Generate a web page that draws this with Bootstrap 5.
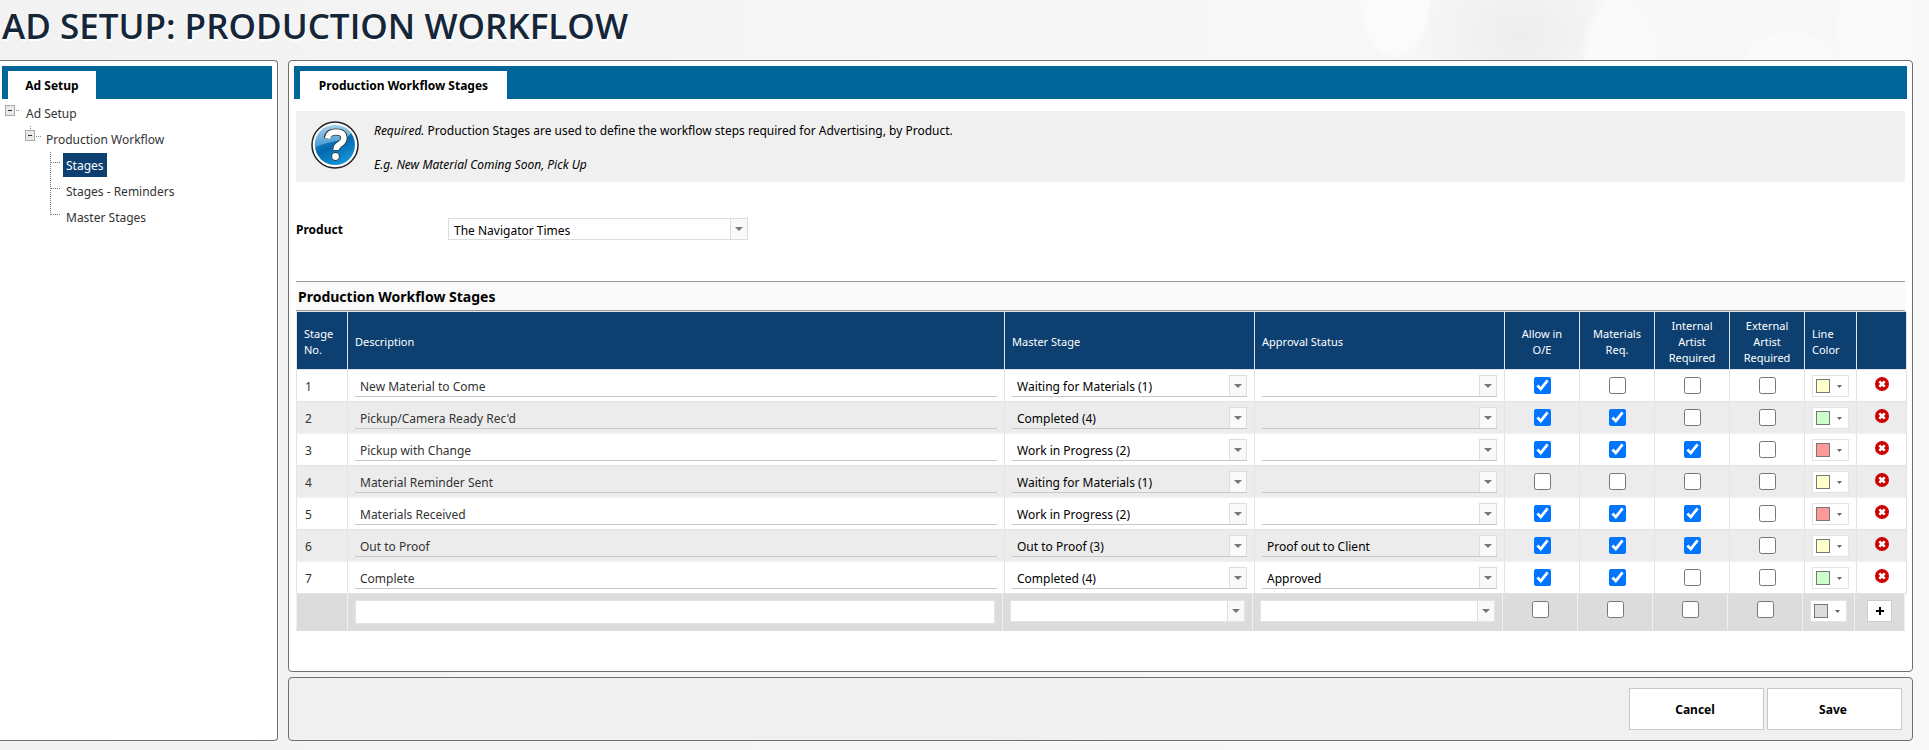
<!DOCTYPE html>
<html lang="en">
<head>
<meta charset="utf-8">
<meta name="viewport" content="width=device-width, initial-scale=1">
<title>Ad Setup: Production Workflow</title>
<link rel="stylesheet" href="https://cdn.jsdelivr.net/npm/bootstrap@5.3.0/dist/css/bootstrap.min.css">
<style>
  body {
    font: 12px/17px "Noto Sans", "Open Sans", sans-serif;
    color: #000;
    background:
      radial-gradient(ellipse 36px 58px at 1395px 0, #fbfbfb 92%, transparent),
      radial-gradient(ellipse 40px 70px at 1620px 60px, #fafafa 80%, transparent),
      radial-gradient(ellipse 50px 40px at 1790px 70px, #fafafa 90%, transparent),
      radial-gradient(ellipse 40px 70px at 1875px 25px, #fafafa 90%, transparent),
      radial-gradient(ellipse 110px 90px at 1520px 35px, #ededed, transparent),
      linear-gradient(90deg, #f2f2f2, #f7f7f7 60%, #f8f8f8);
  }
  .page-title { font: 600 35px/52px "Open Sans", "Noto Sans", sans-serif; color: #152639; text-shadow: 1px 2px 1px #fff; padding: 0 2px 8px; }
  .workspace { padding: 0 16px 9px 0; gap: 10px; }
  .panel { background: #fff; border: 1px solid #707070; border-radius: 4px; padding: 5px; }
  .side-panel { flex: 0 0 278px; border-left: 0; border-radius: 0 4px 4px 0; padding-left: 2px; }
  .tab-strip { background: #006699; padding: 5px 6px 0; height: 33px; }
  .tab-strip .nav-link { background: #fff; color: #000; font-weight: 700; padding: 1px 16px 0; line-height: 27px; min-width: 88px; text-align: center; }
  .main-tab .nav-link { min-width: 207px; }

  .tree-row { height: 26px; color: #333; }
  .tree-row a { color: #333; text-decoration: none; padding: 1px 3px 0; line-height: 23px; }
  .tree-row a.current { background: #0d4071; color: #fff; }
  .tree-row svg { flex: none; }
  .tree-list { padding-top: 1px; }
  .level-1 { padding-left: 2px; }
  .level-2 { padding-left: 22px; }
  .level-3 { padding-left: 46px; }

  .panel-body { padding: 0 2px; }
  .info { background: #f0f0f0; margin-top: 12px; padding: 10px 15px; gap: 15px; height: 71px; }
  .info-text { padding-top: 1px; }
  .product { margin: 36px 0 41px; height: 22px; }
  .product label { flex: 0 0 152px; font-weight: 700; padding-top: 1px; }
  .section-title { font-size: 14px; line-height: 27px; font-weight: 700; background: #f9f9f9; border: solid #999; border-width: 1px 0; padding: 1px 2px 0; margin: 0; }

  .combo, .text-field { display: block; width: 100%; height: 22px; border: 0; border-bottom: 1px solid #c8c8c8; border-radius: 0; background-color: transparent; padding: 2px 5px 0; color: #000; outline-offset: 0; }
  .text-field { color: #333; }
  .combo {
    appearance: none; padding-right: 20px;
    background: no-repeat right top/18px 22px url("data:image/svg+xml,%3Csvg xmlns='http://www.w3.org/2000/svg' width='18' height='22'%3E%3Crect x='.5' y='.5' width='17' height='21' fill='%23f9f9f9' stroke='%23ddd'/%3E%3Cpath d='M5 9h8l-4 4z' fill='%23777'/%3E%3C/svg%3E");
    background-origin: border-box;
  }
  .combo.boxed { width: 300px; border: 1px solid #ddd; background-color: #fff; }

  .stages { table-layout: fixed; border-collapse: separate; border-spacing: 0; width: calc(100% + 2px); }
  .stages.new-row { width: 100%; }
  .c-no { width: 52px; } .c-combo { width: 250px; } .c-check { width: 75px; } .c-color { width: 52px; } .c-act { width: 50px; }
  .stages th, .stages td { border: solid #e3e3e3; border-width: 0 1px 1px 0; }
  .stages th:first-child, .stages td:first-child { border-left-width: 1px; }
  .stages th { background: #0d4071; color: #fff; font-weight: 400; font-size: 11px; line-height: 16px; height: 59px; border-top-width: 1px; padding: 6px 7px 3px; }
  .stages td { height: 32px; padding: 5px 7px 0; vertical-align: top; color: #333; }
  .stages td:first-child { padding: 8px 8px 0; }
  .stages tbody tr:nth-child(even) td { background: #ececec; border-bottom-color: #f3f3f3; }
  .stages input[type=checkbox] { width: 17px; height: 17px; margin: 2px 0 0; accent-color: #0075ff; display: inline-block; vertical-align: top; }
  .color-btn { width: 37px; height: 22px; border: 1px solid #e3e3e3; background: #fff; padding: 0 3px; display: flex; align-items: center; gap: 7px; }
  .color-btn i { width: 14px; height: 14px; border: 1px solid #777; }
  .color-btn svg { display: block; }
  .del-btn { border: 0; background: none; padding: 2px 0 0; display: block; margin: 0 auto; line-height: 0; }
  .stages.new-row td { background: #dcdcdc; height: 37px; padding: 6px 7px 0; border-color: #f0f0f0; border-bottom-color: #dcdcdc; }
  .new-row .text-field, .new-row .combo { background-color: #fff; border: 1px solid #e3e3e3; }
  .new-row .text-field { height: 24px; }
  .new-row input[type=checkbox] { margin-top: 1px; }
  .add-btn { width: 25px; height: 22px; border: 1px solid #ccc; background: #fff; padding: 0; display: flex; align-items: center; justify-content: center; margin: 0 auto; }

  .action-bar { background: #f0f0f0; height: 64px; padding: 0 10px; gap: 3px; }
  .action-bar button { width: 135px; height: 42px; border: 1px solid #c8c8c8; border-radius: 0; background: #fff; font-weight: 700; color: #000; padding: 0 8px 0 5px; }
</style>
</head>
<body class="d-flex flex-column min-vh-100">
<h1 class="page-title m-0">AD SETUP: PRODUCTION WORKFLOW</h1>
<div class="workspace d-flex flex-grow-1">
  <aside class="panel side-panel">
    <nav class="nav tab-strip"><a class="nav-link" href="#">Ad Setup</a></nav>
    <ul class="tree-list list-unstyled m-0">
      <li>
        <div class="tree-row level-1 d-flex align-items-center"><svg width="19" height="26"><rect x="1.500" y="5.500" width="9" height="10" fill="#e8e8e8" stroke="#aaa"/><path d="M4 10.500h4" stroke="#333"/><path d="M12 10.500h4" stroke="#888" stroke-dasharray="1 1"/></svg><a href="#">Ad Setup</a></div>
        <ul class="list-unstyled">
          <li>
            <div class="tree-row level-2 d-flex align-items-center"><svg width="19" height="26"><path d="M6.500 0v5M12 10.500h5" stroke="#888" stroke-dasharray="1 1"/><rect x="1.500" y="4.500" width="9" height="10" fill="#e8e8e8" stroke="#aaa"/><path d="M4 9.500h4" stroke="#333"/></svg><a href="#">Production Workflow</a></div>
            <ul class="list-unstyled">
              <li class="tree-row level-3 d-flex align-items-center"><svg width="15" height="26"><path d="M2.500 0v26M3 10.500h9" stroke="#777" stroke-dasharray="1 1"/></svg><a class="current" href="#">Stages</a></li>
              <li class="tree-row level-3 d-flex align-items-center"><svg width="15" height="26"><path d="M2.500 0v26M3 10.500h9" stroke="#777" stroke-dasharray="1 1"/></svg><a href="#">Stages - Reminders</a></li>
              <li class="tree-row level-3 d-flex align-items-center"><svg width="15" height="26"><path d="M2.500 0v11M3 10.500h9" stroke="#777" stroke-dasharray="1 1"/></svg><a href="#">Master Stages</a></li>
            </ul>
          </li>
        </ul>
      </li>
    </ul>
  </aside>

  <div class="d-flex flex-column flex-grow-1" style="gap:5px">
    <main class="panel flex-grow-1">
      <nav class="nav tab-strip main-tab"><a class="nav-link" href="#">Production Workflow Stages</a></nav>
      <div class="panel-body">
        <div class="info d-flex">
          <svg width="48" height="48" viewBox="0 0 48 48" class="flex-shrink-0">
            <defs><linearGradient id="ball" x1="0" y1="0" x2=".5" y2="1"><stop offset="0" stop-color="#4aa3d8"/><stop offset=".6" stop-color="#0268b0"/><stop offset="1" stop-color="#1590d4"/></linearGradient>
            <linearGradient id="gloss" x1="0" y1="0" x2="0" y2="1"><stop offset="0" stop-color="#cfe6f5"/><stop offset="1" stop-color="#4ba3d6"/></linearGradient></defs>
            <circle cx="24" cy="24" r="23" fill="#fff" stroke="#222" stroke-width="1.500"/>
            <circle cx="24" cy="24" r="20" fill="url(#ball)"/>
            <path d="M4 27A20 20 0 0 1 40 12C34 22 16 19 4 27z" fill="url(#gloss)" opacity=".75"/>
            <path d="M16 17.500q1-6.500 9-6.500 8 0 8 6 0 3.500-4.500 6.500-3.500 2-3.500 6" fill="none" stroke="#333" stroke-width="7"/>
            <circle cx="24.500" cy="35.500" r="4.200" fill="#333"/>
            <path d="M16.500 17.500q1-6.500 8.500-6.500 8 0 8 6 0 3.500-4.500 6.500-3.500 2-3.500 5.500" fill="none" stroke="#fff" stroke-width="5.500"/>
            <circle cx="24.500" cy="35.500" r="3.400" fill="#fff"/>
          </svg>
          <div class="info-text"><em>Required.</em> Production Stages are used to define the workflow steps required for Advertising, by Product.<br><br><em>E.g. New Material Coming Soon, Pick Up</em></div>
        </div>
        <div class="product d-flex align-items-center">
          <label for="product">Product</label>
          <select id="product" class="combo boxed"><option>The Navigator Times</option></select>
        </div>
        <h2 class="section-title">Production Workflow Stages</h2>
        <table class="stages">
          <colgroup><col class="c-no"><col><col class="c-combo"><col class="c-combo"><col class="c-check"><col class="c-check"><col class="c-check"><col class="c-check"><col class="c-color"><col class="c-act"></colgroup>
          <thead><tr><th>Stage No.</th><th>Description</th><th>Master Stage</th><th>Approval Status</th><th class="text-center">Allow in<br>O/E</th><th class="text-center">Materials<br>Req.</th><th class="text-center">Internal<br>Artist<br>Required</th><th class="text-center">External<br>Artist<br>Required</th><th>Line<br>Color</th><th></th></tr></thead>
          <tbody id="stageRows"></tbody>
        </table>
        <table class="stages new-row">
          <colgroup><col class="c-no"><col><col class="c-combo"><col class="c-combo"><col class="c-check"><col class="c-check"><col class="c-check"><col class="c-check"><col class="c-color"><col class="c-act"></colgroup>
          <tbody><tr>
            <td></td>
            <td><input type="text" class="text-field" aria-label="New description"></td>
            <td><select class="combo" aria-label="New master stage"><option></option></select></td>
            <td><select class="combo" aria-label="New approval status"><option></option></select></td>
            <td class="text-center"><input type="checkbox" aria-label="Allow in O/E"></td>
            <td class="text-center"><input type="checkbox" aria-label="Materials required"></td>
            <td class="text-center"><input type="checkbox" aria-label="Internal artist required"></td>
            <td class="text-center"><input type="checkbox" aria-label="External artist required"></td>
            <td><button type="button" class="color-btn" aria-label="Line color"><i style="background:#dcdcdc"></i><svg width="5" height="3"><path d="M0 0h5L2.500 3z" fill="#666"/></svg></button></td>
            <td><button type="button" class="add-btn" aria-label="Add stage"><svg width="8" height="8"><path d="M4 0v8M0 4h8" stroke="#000" stroke-width="2"/></svg></button></td>
          </tr></tbody>
        </table>
      </div>
    </main>
    <footer class="panel action-bar d-flex justify-content-end align-items-center">
      <button type="button">Cancel</button>
      <button type="button">Save</button>
    </footer>
  </div>
</div>
<script src="https://cdn.jsdelivr.net/npm/bootstrap@5.3.0/dist/js/bootstrap.bundle.min.js"></script>
<script>
  const YELLOW = '#ffffcc', GREEN = '#ccffcc', RED = '#ff9999';
  // description, master stage, approval status, four flags, line color
  const stages = [
    ['New Material to Come', 'Waiting for Materials (1)', '', [1, 0, 0, 0], YELLOW],
    ["Pickup/Camera Ready Rec'd", 'Completed (4)', '', [1, 1, 0, 0], GREEN],
    ['Pickup with Change', 'Work in Progress (2)', '', [1, 1, 1, 0], RED],
    ['Material Reminder Sent', 'Waiting for Materials (1)', '', [0, 0, 0, 0], YELLOW],
    ['Materials Received', 'Work in Progress (2)', '', [1, 1, 1, 0], RED],
    ['Out to Proof', 'Out to Proof (3)', 'Proof out to Client', [1, 1, 1, 0], YELLOW],
    ['Complete', 'Completed (4)', 'Approved', [1, 1, 0, 0], GREEN]
  ];
  const flags = ['Allow in O/E', 'Materials required', 'Internal artist required', 'External artist required'];
  document.getElementById('stageRows').innerHTML = stages.map(([desc, master, approval, on, color], i) => `
    <tr>
      <td>${i + 1}</td>
      <td><input type="text" class="text-field" aria-label="Description" value="${desc}"></td>
      <td><select class="combo" aria-label="Master stage"><option>${master}</option></select></td>
      <td><select class="combo" aria-label="Approval status"><option>${approval}</option></select></td>
      ${on.map((v, k) => `<td class="text-center"><input type="checkbox" aria-label="${flags[k]}" ${v ? 'checked' : ''}></td>`).join('')}
      <td><button type="button" class="color-btn" aria-label="Line color"><i style="background:${color}"></i><svg width="5" height="3"><path d="M0 0h5L2.500 3z" fill="#666"/></svg></button></td>
      <td><button type="button" class="del-btn" aria-label="Delete stage"><svg width="14" height="14"><circle cx="7" cy="7" r="7" fill="#cc0000"/><path d="M4.300 4.300l5.400 5.400M9.700 4.300l-5.400 5.400" stroke="#fff" stroke-width="2.600"/></svg></button></td>
    </tr>`).join('');
</script>
</body>
</html>
